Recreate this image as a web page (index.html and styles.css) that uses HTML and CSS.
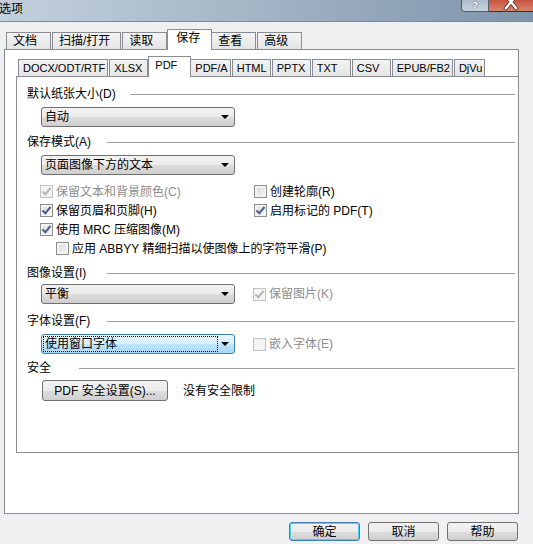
FILE: index.html
```html
<!DOCTYPE html>
<html lang="zh-CN">
<head>
    <meta charset="UTF-8">
    <meta name="viewport" content="width=device-width, initial-scale=1.0">
    <title>选项</title>
    <link rel="stylesheet" href="styles.css">
</head>
<body>

<div class="titlebar">
    <span class="title-text">选项</span>
    <div class="caption-buttons">
        <div class="help-btn">?</div>
        <div class="close-btn">
            <svg width="20" height="12" viewBox="0 0 20 12">
                <path d="M5 -4 L15 8 M15 -4 L5 8" stroke="#5a2a22" stroke-width="4" stroke-linecap="square"/>
                <path d="M5 -4 L15 8 M15 -4 L5 8" stroke="#fff" stroke-width="2.4" stroke-linecap="square"/>
            </svg>
        </div>
    </div>
</div>

<div class="dialog">
    <div class="outer-tabs">
        <div class="tab">文档</div>
        <div class="tab">扫描/打开</div>
        <div class="tab">读取</div>
        <div class="tab active">保存</div>
        <div class="tab">查看</div>
        <div class="tab">高级</div>
    </div>

    <div class="outer-panel">
        <div class="inner-tabs">
            <div class="tab">DOCX/ODT/RTF</div>
            <div class="tab">XLSX</div>
            <div class="tab active">PDF</div>
            <div class="tab">PDF/A</div>
            <div class="tab">HTML</div>
            <div class="tab">PPTX</div>
            <div class="tab">TXT</div>
            <div class="tab">CSV</div>
            <div class="tab">EPUB/FB2</div>
            <div class="tab last">DjVu</div>
        </div>

        <div class="inner-panel">
            <div class="content">
                <!-- Default paper size -->
                <div class="group-head first">
                    <span class="group-label w-paper">默认纸张大小(D)</span>
                    <span class="group-line"></span>
                </div>
                <div class="field-row">
                    <div class="combo"><span class="combo-text">自动</span><span class="combo-arrow"></span></div>
                </div>

                <!-- Save mode -->
                <div class="group-head">
                    <span class="group-label w-mode">保存模式(A)</span>
                    <span class="group-line"></span>
                </div>
                <div class="field-row">
                    <div class="combo"><span class="combo-text">页面图像下方的文本</span><span class="combo-arrow"></span></div>
                </div>

                <div class="checks">
                    <div class="check-row">
                        <label class="check disabled"><span class="box checked"></span>保留文本和背景颜色(C)</label>
                        <label class="check right"><span class="box"></span>创建轮廓(R)</label>
                    </div>
                    <div class="check-row">
                        <label class="check"><span class="box checked"></span>保留页眉和页脚(H)</label>
                        <label class="check right"><span class="box checked"></span>启用标记的 PDF(T)</label>
                    </div>
                    <div class="check-row">
                        <label class="check"><span class="box checked"></span>使用 MRC 压缩图像(M)</label>
                    </div>
                    <div class="check-row sub">
                        <label class="check"><span class="box"></span>应用 ABBYY 精细扫描以使图像上的字符平滑(P)</label>
                    </div>
                </div>

                <!-- Image settings -->
                <div class="group-head">
                    <span class="group-label w-mode">图像设置(I)</span>
                    <span class="group-line"></span>
                </div>
                <div class="field-row tight">
                    <div class="combo"><span class="combo-text">平衡</span><span class="combo-arrow"></span></div>
                    <label class="check disabled side"><span class="box checked"></span>保留图片(K)</label>
                </div>

                <!-- Font settings -->
                <div class="group-head loose">
                    <span class="group-label w-mode">字体设置(F)</span>
                    <span class="group-line"></span>
                </div>
                <div class="field-row">
                    <div class="combo focused"><span class="combo-text">使用窗口字体</span><span class="combo-arrow"></span></div>
                    <label class="check disabled side"><span class="box"></span>嵌入字体(E)</label>
                </div>

                <!-- Security -->
                <div class="group-head short">
                    <span class="group-label w-sec">安全</span>
                    <span class="group-line"></span>
                </div>
                <div class="field-row tight-btn">
                    <button class="btn security-btn">PDF 安全设置(S)...</button>
                    <span class="security-note">没有安全限制</span>
                </div>
            </div>
        </div>
    </div>

    <div class="footer">
        <button class="btn footer-btn default">确定</button>
        <button class="btn footer-btn">取消</button>
        <button class="btn footer-btn">帮助</button>
    </div>
</div>

</body>
</html>
```

FILE: styles.css
```css
body {
    margin: 0;
    padding: 0;
    width: 533px;
    height: 544px;
    overflow: hidden;
    background-color: #f0f0f0;
    font-family: "Liberation Sans", "Noto Sans CJK SC", sans-serif;
    font-size: 12px;
    color: #000;
}

/* Title bar */
.titlebar {
    height: 21px;
    display: flex;
    align-items: flex-start;
    background: linear-gradient(to right, #c3d0dd 0%, #a5b6c7 45%, #7e94aa 100%);
    border-bottom: 1px solid #7a8a9b;
}

.title-text {
    line-height: 17px;
    padding-top: 1px;
    margin-left: -1px;
}

.caption-buttons {
    margin-left: auto;
    display: flex;
    margin-right: -1px;
}

.help-btn {
    width: 26px;
    height: 11px;
    border: 1px solid #4e5d6c;
    border-top: none;
    border-bottom-left-radius: 4px;
    background: linear-gradient(#aebdcc, #c6d2de);
    color: #fff;
    font-weight: bold;
    font-size: 9px;
    line-height: 10px;
    text-align: center;
    text-shadow: 0 0 2px #33404d;
}

.close-btn {
    width: 44px;
    height: 11px;
    border: 1px solid #5a2118;
    border-top: none;
    border-left: none;
    background: linear-gradient(#c8533f, #d8826f);
    display: flex;
    justify-content: center;
}

/* Dialog */
.dialog {
    padding-top: 7px;
}

.tab {
    box-sizing: border-box;
    height: 17px;
    min-width: 45px;
    padding: 0 6px;
    border: 1px solid #898c95;
    border-bottom: none;
    background: linear-gradient(#f3f3f3, #e5e5e5);
    line-height: 16px;
    white-space: nowrap;
}

.tab.active {
    height: 21px;
    margin: 0 -2px -1px -1px;
    padding-left: 8px;
    background: #fff;
    position: relative;
    z-index: 1;
}

.outer-tabs {
    display: flex;
    align-items: flex-end;
    height: 20px;
    margin-left: 6px;
    gap: 1px;
}

.outer-tabs .tab {
    padding-right: 10px;
}

.outer-panel {
    box-sizing: border-box;
    width: 515px;
    height: 465px;
    margin-left: 4px;
    border: 1px solid #898c95;
    background: #fff;
    overflow: hidden;
    padding: 6px 0 0 11px;
}

.inner-tabs {
    display: flex;
    align-items: flex-end;
    height: 20px;
    margin-left: 2px;
    gap: 1px;
}

.inner-tabs .tab {
    min-width: 39px;
    padding: 0 2px 0 4px;
    font-size: 11px;
}

.inner-tabs .tab.active {
    min-width: 43px;
    padding-left: 6px;
}

.inner-tabs .tab.last {
    min-width: 28px;
}

.inner-panel {
    box-sizing: border-box;
    width: 530px;
    height: 377px;
    border: 1px solid #898c95;
    background: #fff;
}

.content {
    width: 488px;
    padding: 9px 0 0 10px;
}

/* Group headers */
.group-head {
    display: flex;
    align-items: center;
    height: 16px;
    margin-top: 7px;
}

.group-head.first {
    margin-top: 0;
}

.group-head.loose {
    margin-top: 9px;
}

.group-head.short {
    margin-top: 6px;
}

.group-label {
    line-height: 16px;
    white-space: nowrap;
}

.w-paper { width: 103px; }
.w-mode { width: 80px; }
.w-sec { width: 52px; }

.group-line {
    flex: 1;
    height: 1px;
    background: #a0a0a0;
}

/* Combos and rows */
.field-row {
    display: flex;
    align-items: center;
    margin-top: 5px;
    padding-left: 14px;
}

.field-row.tight {
    margin-top: 3px;
}

.field-row.tight-btn {
    margin-top: 4px;
}

.combo {
    box-sizing: border-box;
    width: 194px;
    height: 20px;
    border: 1px solid #707070;
    border-radius: 3px;
    background: linear-gradient(#f2f2f2 0%, #ebebeb 50%, #dddddd 51%, #cfcfcf 100%);
    display: flex;
    align-items: center;
    justify-content: space-between;
    padding: 0 5px 0 2px;
}

.combo-text {
    line-height: 16px;
    padding: 0 1px;
}

.combo-arrow {
    width: 0;
    height: 0;
    border-left: 4px solid transparent;
    border-right: 4px solid transparent;
    border-top: 4px solid #000;
}

.combo.focused {
    border-color: #3c7fb1;
    background: linear-gradient(#eaf6fd 0%, #d9f0fc 50%, #bee6fd 51%, #a7d9f5 100%);
}

.combo.focused .combo-text {
    width: 171px;
    outline: 1px dotted #000;
    line-height: 14px;
}

/* Checkboxes */
.checks {
    margin-top: 7px;
    padding-left: 13px;
}

.check-row {
    display: flex;
    height: 19px;
    align-items: center;
    position: relative;
}

.check-row.sub {
    padding-left: 16px;
}

.check {
    display: flex;
    align-items: center;
    line-height: 16px;
    white-space: nowrap;
}

.check.right {
    position: absolute;
    left: 214px;
}

.check.side {
    margin-left: 18px;
}

.box {
    box-sizing: border-box;
    width: 13px;
    height: 13px;
    margin-right: 3px;
    border: 1px solid #8e8f8f;
    background: linear-gradient(135deg, #d8d8d8, #f7f7f7);
    box-shadow: inset 0 0 0 2px #f4f4f4;
    position: relative;
}

.box.checked::after {
    content: "";
    position: absolute;
    left: 3px;
    top: 0px;
    width: 3px;
    height: 7px;
    border-right: 2px solid #4a5f8f;
    border-bottom: 2px solid #4a5f8f;
    transform: rotate(40deg);
}

.check.disabled {
    color: #8d8d8d;
}

.check.disabled .box {
    border-color: #c2c2c2;
    background: #f4f4f4;
}

.check.disabled .box.checked::after {
    border-color: #b5b5b5;
}

/* Buttons */
.btn {
    box-sizing: border-box;
    font-family: "Liberation Sans", "Noto Sans CJK SC", sans-serif;
    font-size: 12px;
    color: #000;
    border: 1px solid #707070;
    border-radius: 3px;
    background: linear-gradient(#f2f2f2 0%, #ebebeb 50%, #dddddd 51%, #cfcfcf 100%);
    padding: 0;
    line-height: 16px;
}

.security-btn {
    width: 126px;
    height: 21px;
    margin-left: 1px;
}

.security-note {
    margin-left: 15px;
    line-height: 16px;
}

.footer {
    display: flex;
    justify-content: flex-end;
    gap: 8px;
    margin-top: 8px;
    padding-right: 15px;
}

.footer-btn {
    width: 71px;
    height: 19px;
}

.footer-btn.default {
    border-color: #3c7fb1;
    box-shadow: inset 0 0 0 1px #48d3fb;
}
```
